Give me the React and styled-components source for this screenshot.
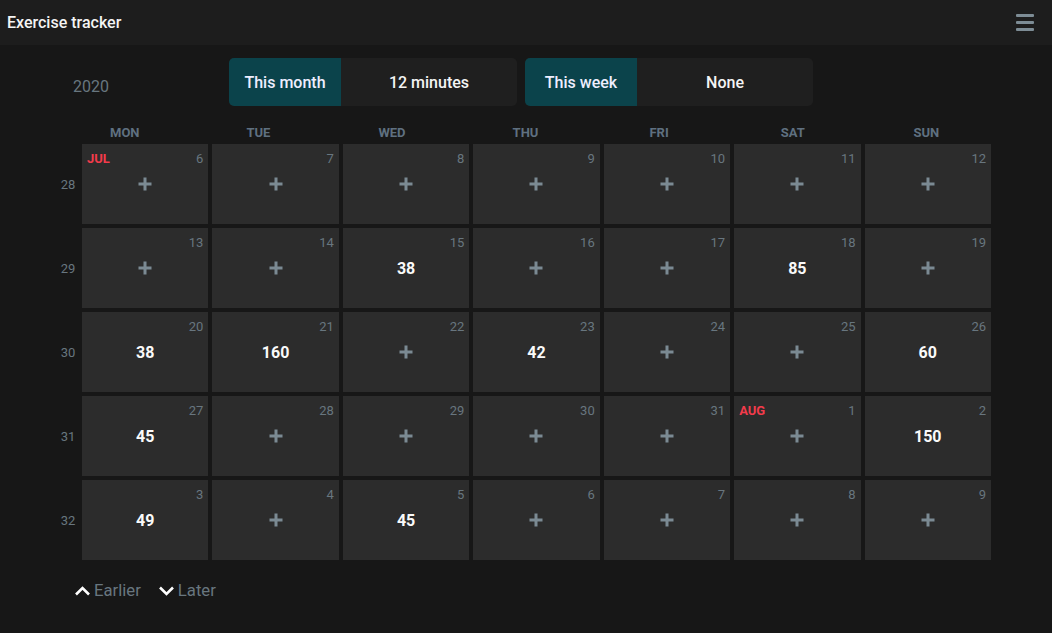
import React from "react";
import styled, { createGlobalStyle } from "styled-components";

const Global = createGlobalStyle`
  html, body { margin: 0; padding: 0; background: #171717; }
  body { font-family: Roboto, "Liberation Sans", sans-serif; color: #fff; }
`;

const Page = styled.div`
  width: 1052px;
  min-height: 633px;
  background: #171717;
`;

const Header = styled.header`
  height: 45px;
  background: #1d1d1d;
  display: flex;
  align-items: center;
  justify-content: space-between;
  padding: 0 16px 0 7px;
  box-sizing: border-box;
`;

const Title = styled.h1`
  margin: 0;
  font-size: 16px;
  font-weight: 500;
  color: #f4f4f4;
`;

const MenuButton = styled.button`
  background: none;
  border: none;
  padding: 0;
  width: 22px;
  height: 22px;
  display: flex;
  flex-direction: column;
  justify-content: center;
  gap: 4px;
  cursor: pointer;
  span {
    display: block;
    height: 3px;
    width: 18px;
    margin-left: 2px;
    background: #7d8c95;
    border-radius: 1px;
  }
`;

const Main = styled.main`
  padding: 13px 0 0 54px;
`;

const TopRow = styled.div`
  display: flex;
  align-items: center;
  height: 48px;
`;

const Year = styled.div`
  width: 175px;
  padding-left: 19px;
  box-sizing: border-box;
  font-size: 16px;
  color: #68767f;
  margin-top: 9px;
`;

const Summaries = styled.div`
  display: flex;
  gap: 8px;
`;

const Summary = styled.div`
  display: flex;
  width: 288px;
  height: 48px;
  border-radius: 5px;
  overflow: hidden;
  background: #1f1f1f;
  font-size: 16px;
  font-weight: 500;
`;

const SummaryLabel = styled.div`
  width: 112px;
  background: #0b434b;
  display: flex;
  align-items: center;
  justify-content: center;
  color: #eef;
`;

const SummaryValue = styled.div`
  flex: 1;
  display: flex;
  align-items: center;
  justify-content: center;
  color: #f4f4f4;
`;

const DayHeads = styled.div`
  display: flex;
  width: 935px;
  margin: 16px 0 0 4px;
  height: 20px;
`;

const DayHead = styled.div`
  flex: 1;
  display: flex;
  align-items: center;
  justify-content: center;
  font-size: 13px;
  font-weight: 700;
  color: #5f7080;
`;

const Grid = styled.div`
  display: grid;
  grid-template-columns: 24px repeat(7, 1fr);
  grid-auto-rows: 80px;
  gap: 4px;
  width: 937px;
  margin-top: 2px;
`;

const WeekNum = styled.div`
  display: flex;
  align-items: center;
  justify-content: center;
  padding-left: 4px;
  font-size: 13px;
  color: #68767f;
`;

const Cell = styled.div`
  position: relative;
  background: #2c2c2c;
  display: flex;
  align-items: center;
  justify-content: center;
`;

const DayNum = styled.span`
  position: absolute;
  top: 7px;
  right: 5px;
  font-size: 13px;
  line-height: 15px;
  color: #68767f;
`;

const MonthTag = styled.span`
  position: absolute;
  top: 7px;
  left: 5px;
  font-size: 13px;
  line-height: 15px;
  font-weight: 700;
  color: #f23b4b;
`;

const Value = styled.span`
  font-size: 16px;
  font-weight: 700;
  color: #fafafa;
`;

const Footer = styled.div`
  display: flex;
  gap: 17px;
  padding: 21px 0 0 20px;
`;

const NavLink = styled.button`
  background: none;
  border: none;
  padding: 0;
  display: flex;
  align-items: center;
  gap: 3px;
  font-family: inherit;
  font-size: 16.7px;
  color: #68767f;
  cursor: pointer;
`;

const Plus = () => (
  <svg width="16" height="16" viewBox="0 0 16 16">
    <path d="M8 1.5v13M1.5 8h13" stroke="#7b8a93" strokeWidth="3" />
  </svg>
);

const Chevron = ({ up }) => (
  <svg width="17" height="16" viewBox="0 0 17 16">
    <path
      d={up ? "M2 11.5L8.5 5L15 11.5" : "M2 4.5L8.5 11L15 4.5"}
      fill="none"
      stroke="#ffffff"
      strokeWidth="2.6"
    />
  </svg>
);

const days = ["MON", "TUE", "WED", "THU", "FRI", "SAT", "SUN"];

const weeks = [
  { n: 28, days: [[6, null, "JUL"], [7], [8], [9], [10], [11], [12]] },
  { n: 29, days: [[13], [14], [15, 38], [16], [17], [18, 85], [19]] },
  { n: 30, days: [[20, 38], [21, 160], [22], [23, 42], [24], [25], [26, 60]] },
  { n: 31, days: [[27, 45], [28], [29], [30], [31], [1, null, "AUG"], [2, 150]] },
  { n: 32, days: [[3, 49], [4], [5, 45], [6], [7], [8], [9]] },
];

export default function App() {
  return (
    <Page>
      <Global />
      <Header>
        <Title>Exercise tracker</Title>
        <MenuButton aria-label="menu">
          <span />
          <span />
          <span />
        </MenuButton>
      </Header>
      <Main>
        <TopRow>
          <Year>2020</Year>
          <Summaries>
            <Summary>
              <SummaryLabel>This month</SummaryLabel>
              <SummaryValue>12 minutes</SummaryValue>
            </Summary>
            <Summary>
              <SummaryLabel>This week</SummaryLabel>
              <SummaryValue>None</SummaryValue>
            </Summary>
          </Summaries>
        </TopRow>
        <DayHeads>
          {days.map((d) => (
            <DayHead key={d}>{d}</DayHead>
          ))}
        </DayHeads>
        <Grid>
          {weeks.map((w) => (
            <React.Fragment key={w.n}>
              <WeekNum>{w.n}</WeekNum>
              {w.days.map(([d, v, m], i) => (
                <Cell key={i}>
                  {m && <MonthTag>{m}</MonthTag>}
                  <DayNum>{d}</DayNum>
                  {v ? <Value>{v}</Value> : <Plus />}
                </Cell>
              ))}
            </React.Fragment>
          ))}
        </Grid>
        <Footer>
          <NavLink>
            <Chevron up />
            Earlier
          </NavLink>
          <NavLink>
            <Chevron />
            Later
          </NavLink>
        </Footer>
      </Main>
    </Page>
  );
}
